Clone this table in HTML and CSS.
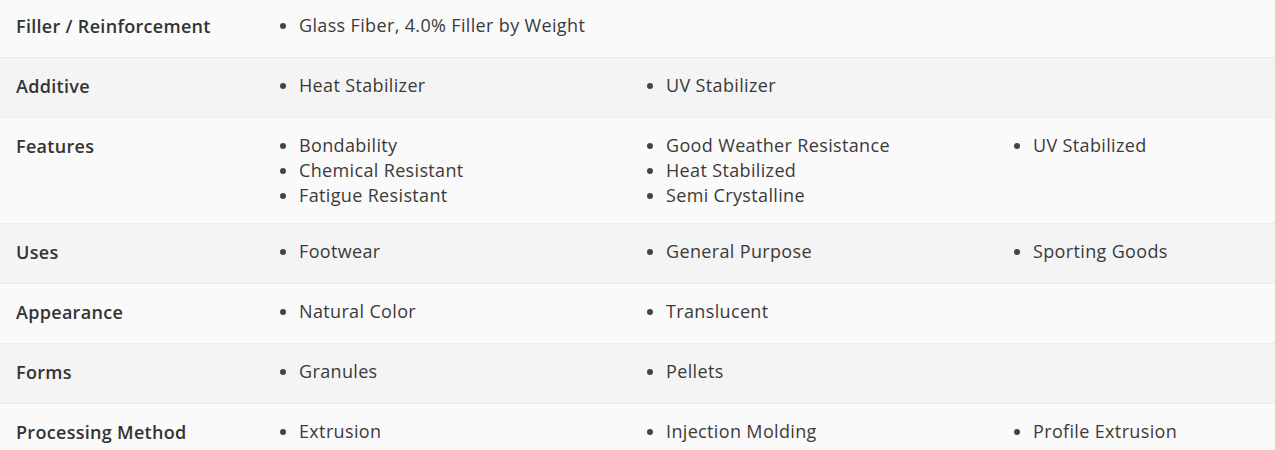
FILE: index.html
```html
<!DOCTYPE html>
<html lang="en">
<head>
<meta charset="utf-8">
<title>Properties</title>
<link rel="stylesheet" href="styles.css">
</head>
<body>
<div class="table">
  <div class="row">
    <div class="label">Filler / Reinforcement</div>
    <div class="values">
      <ul class="col"><li>Glass Fiber, 4.0% Filler by Weight</li></ul>
    </div>
  </div>
  <div class="row">
    <div class="label">Additive</div>
    <div class="values">
      <ul class="col"><li>Heat Stabilizer</li></ul>
      <ul class="col"><li>UV Stabilizer</li></ul>
    </div>
  </div>
  <div class="row">
    <div class="label">Features</div>
    <div class="values">
      <ul class="col"><li>Bondability</li><li>Chemical Resistant</li><li>Fatigue Resistant</li></ul>
      <ul class="col"><li>Good Weather Resistance</li><li>Heat Stabilized</li><li>Semi Crystalline</li></ul>
      <ul class="col"><li>UV Stabilized</li></ul>
    </div>
  </div>
  <div class="row">
    <div class="label">Uses</div>
    <div class="values">
      <ul class="col"><li>Footwear</li></ul>
      <ul class="col"><li>General Purpose</li></ul>
      <ul class="col"><li>Sporting Goods</li></ul>
    </div>
  </div>
  <div class="row">
    <div class="label">Appearance</div>
    <div class="values">
      <ul class="col"><li>Natural Color</li></ul>
      <ul class="col"><li>Translucent</li></ul>
    </div>
  </div>
  <div class="row">
    <div class="label">Forms</div>
    <div class="values">
      <ul class="col"><li>Granules</li></ul>
      <ul class="col"><li>Pellets</li></ul>
    </div>
  </div>
  <div class="row">
    <div class="label">Processing Method</div>
    <div class="values">
      <ul class="col"><li>Extrusion</li></ul>
      <ul class="col"><li>Injection Molding</li></ul>
      <ul class="col"><li>Profile Extrusion</li></ul>
    </div>
  </div>
</div>
</body>
</html>
```

FILE: styles.css
```css
html, body {
  margin: 0;
  padding: 0;
  background: #fafafa;
}
body {
  font-family: "Open Sans", "Liberation Sans", sans-serif;
  color: #3a3a3a;
  overflow: hidden;
}
.table {
  margin-top: -2px;
}
.row {
  display: flex;
  align-items: flex-start;
  border-bottom: 1px solid #ebebeb;
  background: #fafafa;
}
.row:nth-child(even) {
  background: #f4f4f4;
}
.label {
  width: 280px;
  flex: none;
  box-sizing: border-box;
  padding: 14px 16px 16px;
  font-size: 18px;
  letter-spacing: 0.3px;
  line-height: 29px;
  font-weight: 600;
  color: #333;
}
.values {
  display: flex;
  flex: 1;
  min-width: 0;
  padding: 15px 0;
}
.col {
  list-style: none;
  margin: 0;
  padding: 0;
  width: 367px;
  flex: none;
}
.col:last-child {
  width: auto;
  flex: 1;
  min-width: 0;
}
.col li {
  display: flex;
  align-items: center;
  font-size: 18px;
  letter-spacing: 0.35px;
  line-height: 25px;
  white-space: nowrap;
}
.col li::before {
  content: "";
  width: 6px;
  height: 6px;
  border-radius: 50%;
  background: #444;
  margin-right: 13px;
  flex: none;
}
```
